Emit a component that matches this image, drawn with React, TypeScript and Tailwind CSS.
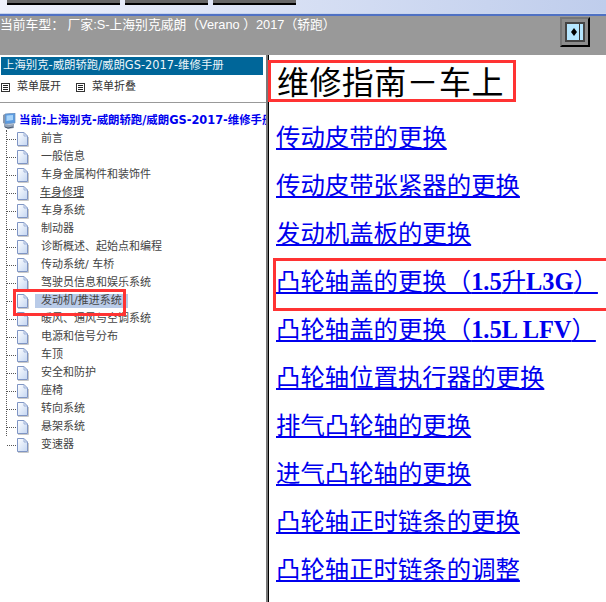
const treeItems = [
  "前言",
  "一般信息",
  "车身金属构件和装饰件",
  "车身修理",
  "车身系统",
  "制动器",
  "诊断概述、起始点和编程",
  "传动系统/ 车桥",
  "驾驶员信息和娱乐系统",
  "发动机/推进系统",
  "暖风、通风与空调系统",
  "电源和信号分布",
  "车顶",
  "安全和防护",
  "座椅",
  "转向系统",
  "悬架系统",
  "变速器",
];

const links: React.ReactNode[] = [
  "传动皮带的更换",
  "传动皮带张紧器的更换",
  "发动机盖板的更换",
  <>
    凸轮轴盖的更换（<b>1.5</b>升<b>L3G</b>）
  </>,
  <>
    凸轮轴盖的更换（<b>1.5L LFV</b>）
  </>,
  "凸轮轴位置执行器的更换",
  "排气凸轮轴的更换",
  "进气凸轮轴的更换",
  "凸轮轴正时链条的更换",
  "凸轮轴正时链条的调整",
];

function PageIcon() {
  return (
    <svg width="13" height="15" viewBox="0 0 13 15" className="shrink-0">
      <defs>
        <linearGradient id="pg" x1="0" y1="0" x2="1" y2="1">
          <stop offset="0" stopColor="#ffffff" />
          <stop offset="1" stopColor="#c4d6f2" />
        </linearGradient>
      </defs>
      <path d="M1.5 .5H8L11.5 4V13.5H1.5Z" fill="url(#pg)" stroke="#7f95c4" />
      <path d="M8 .5V4H11.5" fill="none" stroke="#9fb2d8" />
      <path d="M2 14.5H12.5V5" fill="none" stroke="#c9c9c9" />
    </svg>
  );
}

function ComputerIcon() {
  return (
    <svg width="15" height="17" viewBox="0 0 15 17" className="shrink-0">
      <path d="M3 1L13 0V10L3 11Z" fill="#5c9be0" stroke="#6f8fb8" strokeWidth=".7" />
      <path d="M4.5 2.5L11 2V7L4.5 8Z" fill="#a8d4fa" />
      <path d="M1 2L3 1V11L1 10Z" fill="#8a97ab" />
      <path d="M2 11L7 11.5L12 11L12 15L6 16L2 14Z" fill="#93a3b8" />
      <path d="M3 14L6 15L11 14" fill="none" stroke="#4d5a6e" />
    </svg>
  );
}

function MenuIcon() {
  return (
    <span className="flex h-[9px] w-[9px] flex-col justify-center gap-px border border-[#333333] bg-white px-px">
      <span className="h-px bg-[#222222]" />
      <span className="h-px bg-[#222222]" />
      <span className="h-px bg-[#222222]" />
    </span>
  );
}

export default function App() {
  return (
    <div className="relative h-[602px] w-[606px] overflow-hidden bg-white font-['Liberation_Sans','Noto_Sans_CJK_SC',sans-serif]">
      <div className="flex h-[13px] gap-[5px] bg-gradient-to-r from-[#eef1fb] to-[#bfcdec] pl-[7px]">
        <div className="h-[5px] w-[113px] border-b-2 border-black bg-[#666666]" />
        <div className="h-[5px] w-[83px] border-b-2 border-black bg-[#666666]" />
        <div className="h-[5px] w-[83px] border-b-2 border-black bg-[#666666]" />
      </div>
      <div className="h-[3px] border-t border-[#c8d4ec] bg-[#4f71c4]" />

      <div className="flex h-[39px] items-start justify-between bg-[#999999]">
        <div className="pt-[1px] text-[12.8px] leading-[16px] whitespace-nowrap text-white">
          当前车型： 厂家:S-上海别克威朗（Verano ）2017（轿跑）
        </div>
        <div className="mt-[1px] mr-[16px] flex h-[30px] w-[30px] items-center justify-center border-2 border-[#777777] border-r-black border-b-black bg-[#8c8c8c]">
          <div className="flex h-[20px] w-[20px] items-center justify-center border-2 border-[#444444] bg-[#b5e6ff]">
            <span className="h-0 w-0 border-y-[4px] border-r-[3px] border-y-transparent border-r-black" />
            <span className="h-0 w-0 border-y-[4px] border-l-[3px] border-y-transparent border-l-black" />
            <span className="ml-[2px] h-full w-px bg-[#333333]" />
          </div>
        </div>
      </div>

      <div className="flex h-[547px]">
        <aside className="w-[266px] shrink-0 overflow-hidden font-['DejaVu_Sans','Noto_Sans_CJK_SC',sans-serif]">
          <div className="pt-[2px] pl-px pr-[3px]">
            <div className="flex h-[18px] items-center bg-[#006699] pl-[2px] text-[11.4px] whitespace-nowrap text-[#eef6fa]">
              上海别克-威朗轿跑/威朗GS-2017-维修手册
            </div>
          </div>
          <div className="flex h-[25px] items-center pl-px text-[11px] text-[#333333]">
            <MenuIcon />
            <span className="ml-[7px]">菜单展开</span>
            <span className="ml-[15px]">
              <MenuIcon />
            </span>
            <span className="ml-[7px]">菜单折叠</span>
          </div>
          <div className="mt-[2px] border-t border-[#999999]" />
          <div className="mt-[9px] flex h-[18px] items-center pl-[2px]">
            <ComputerIcon />
            <span className="ml-[2px] text-[11.4px] font-bold whitespace-nowrap text-[#0000ee]">
              当前:上海别克-威朗轿跑/威朗GS-2017-维修手册
            </span>
          </div>
          <div className="relative">
            <div className="absolute top-0 left-[6px] h-[306px] border-l border-dotted border-[#555555]" />
            {treeItems.map((item) => {
              const selected = item === "发动机/推进系统";
              const underlined = item === "车身修理";
              return (
                <div key={item} className="flex h-[18px] items-center pl-[7px] text-[11px] text-[#444444]">
                  <span className="w-[9px] border-t border-dotted border-[#555555]" />
                  <PageIcon />
                  <span
                    className={
                      selected
                        ? "ml-[6px] bg-[#b9cbe8] px-[6px] leading-[14px] whitespace-nowrap"
                        : underlined
                          ? "ml-[7px] pl-[4px] underline whitespace-nowrap"
                          : "ml-[12px] whitespace-nowrap"
                    }
                  >
                    {item}
                  </span>
                </div>
              );
            })}
          </div>
        </aside>

        <div className="w-[3px] shrink-0 border-r border-black bg-[#777777]" />

        <main className="min-w-0 flex-1 overflow-hidden pl-[7px] font-['Liberation_Serif','Noto_Sans_CJK_SC',serif]">
          <h1 className="flex h-[55px] items-center pl-[1px] text-[32px] leading-none tracking-[0.4px] whitespace-nowrap text-black">
            维修指南－车上
          </h1>
          <div className="flex flex-col">
            {links.map((link, i) => (
              <a key={i} href="#" className="block h-[48px] text-[24.4px] leading-[56px] whitespace-nowrap text-[#0000ee] underline">
                {link}
              </a>
            ))}
          </div>
        </main>
      </div>

      <div className="pointer-events-none absolute top-[60px] left-[268px] h-[42px] w-[248px] border-[3px] border-[#ff3333]" />
      <div className="pointer-events-none absolute top-[258px] left-[273px] h-[53px] w-[340px] border-[3px] border-[#ff3333]" />
      <div className="pointer-events-none absolute top-[289px] left-[13px] h-[27px] w-[113px] border-[3px] border-[#ff3333]" />
    </div>
  );
}
